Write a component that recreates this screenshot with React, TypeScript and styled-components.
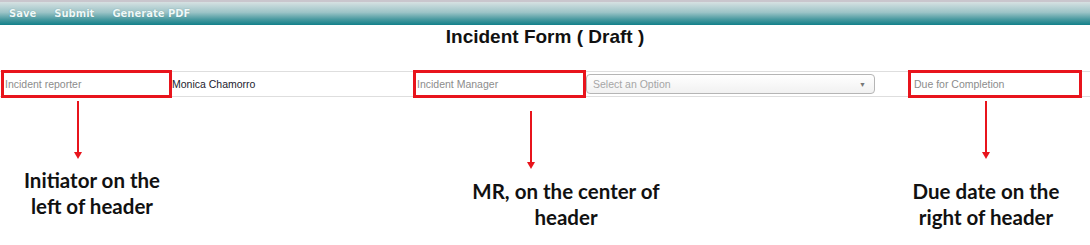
import styled, { createGlobalStyle } from 'styled-components';

const GlobalStyle = createGlobalStyle`
  html, body {
    margin: 0;
    padding: 0;
    background: #fff;
  }
  body {
    font-family: "Liberation Sans", Arial, sans-serif;
  }
`

const Arrow = ({ height }: { height: number }) => (
  <svg width="10" height={height} viewBox={`0 0 10 ${height}`}>
    <line x1="5" y1="0" x2="5" y2={height - 5} stroke="#e8141c" strokeWidth="2" />
    <polygon points={`1,${height - 7} 9,${height - 7} 5,${height}`} fill="#e8141c" />
  </svg>
)

const notes = [
  { width: 184, gap: 0, arrowAt: 73, arrowTop: 4, labelTop: 8, lines: ['Initiator on the', 'left of header'] },
  { width: 200, gap: 282, arrowAt: 60, arrowTop: 14, labelTop: 9, lines: ['MR, on the center of', 'header'] },
  { width: 160, gap: 240, arrowAt: 75, arrowTop: 4, labelTop: 19, lines: ['Due date on the', 'right of header'] },
]

const App = () => {
  return (
    <Page>
      <GlobalStyle />
      <Toolbar>
        <ToolButton>Save</ToolButton>
        <ToolButton>Submit</ToolButton>
        <ToolButton>Generate PDF</ToolButton>
      </Toolbar>

      <Title>Incident Form ( Draft )</Title>

      <FormRow>
        <Cell $width={171} $marked>
          <FieldLabel>Incident reporter</FieldLabel>
        </Cell>
        <Cell $width={241}>
          <FieldValue>Monica Chamorro</FieldValue>
        </Cell>
        <Cell $width={173} $marked>
          <FieldLabel>Incident Manager</FieldLabel>
        </Cell>
        <Cell $width={322}>
          <Select>
            <span>Select an Option</span>
            <Caret>▼</Caret>
          </Select>
        </Cell>
        <Cell $width={174} $marked>
          <FieldLabel $pad={3}>Due for Completion</FieldLabel>
        </Cell>
      </FormRow>

      <Notes>
        {notes.map((n) => (
          <Note key={n.lines[0]} $width={n.width} $gap={n.gap}>
            <ArrowWrap $at={n.arrowAt} $top={n.arrowTop}>
              <Arrow height={58} />
            </ArrowWrap>
            <NoteText $top={n.labelTop}>
              {n.lines.map((l) => (
                <div key={l}>{l}</div>
              ))}
            </NoteText>
          </Note>
        ))}
      </Notes>
    </Page>
  )
}

export default App;

const Page = styled.div`
  width: 1090px;
  height: 245px;
  overflow: hidden;
`
const Toolbar = styled.div`
  display: flex;
  align-items: center;
  gap: 18px;
  height: 23px;
  padding-left: 9px;
  border-top: 2px solid #c9c6cd;
  background: linear-gradient(to bottom, #d6e1e2 0%, #9cc4c7 45%, #4a9aa0 75%, #13808a 100%);
`
const ToolButton = styled.span`
  font-family: "DejaVu Sans", Verdana, sans-serif;
  font-weight: bold;
  font-size: 10px;
  color: #eef8f8;
  text-shadow: 0 0 1px rgba(0, 60, 66, 0.4);
  cursor: pointer;
`
const Title = styled.h1`
  margin: 1px 0 23px;
  height: 22px;
  line-height: 22px;
  text-align: center;
  font-family: "Liberation Sans", Arial, sans-serif;
  font-size: 19px;
  font-weight: bold;
  color: #111;
`
const FormRow = styled.div`
  display: flex;
  align-items: stretch;
  height: 24px;
  padding-left: 1px;
  border-top: 1px solid #dedede;
  border-bottom: 1px solid #dedede;
`
const Cell = styled.div<{ $width: number; $marked?: boolean }>`
  box-sizing: border-box;
  display: flex;
  align-items: center;
  width: ${(p) => p.$width}px;
  flex: none;
  ${(p) => p.$marked && `
    margin: -2px 0;
    border: 3px solid #e8141c;
  `}
`
const FieldLabel = styled.span<{ $pad?: number }>`
  padding-left: ${(p) => p.$pad ?? 1}px;
  font-size: 10.5px;
  color: #8c8c8c;
`
const FieldValue = styled.span`
  font-size: 10.5px;
  color: #22222e;
`
const Select = styled.div`
  box-sizing: border-box;
  display: flex;
  align-items: center;
  justify-content: space-between;
  width: 289px;
  height: 20px;
  padding: 0 8px 0 6px;
  border: 1px solid #b5b5b5;
  border-radius: 4px;
  background: linear-gradient(to bottom, #ffffff 0%, #f1f1f1 100%);
  font-size: 10.5px;
  color: #a6a6a6;
`
const Caret = styled.span`
  font-size: 7px;
  color: #777;
`
const Notes = styled.div`
  display: flex;
  align-items: flex-start;
`
const Note = styled.div<{ $width: number; $gap: number }>`
  width: ${(p) => p.$width}px;
  margin-left: ${(p) => p.$gap}px;
  flex: none;
`
const ArrowWrap = styled.div<{ $at: number; $top: number }>`
  margin: ${(p) => p.$top}px 0 0 ${(p) => p.$at}px;
  height: 58px;
  svg {
    display: block;
  }
`
const NoteText = styled.div<{ $top: number }>`
  margin-top: ${(p) => p.$top}px;
  text-align: center;
  font-family: Lato, "Open Sans", sans-serif;
  font-weight: bold;
  font-size: 20.5px;
  line-height: 26px;
  color: #111;
  white-space: nowrap;
`
